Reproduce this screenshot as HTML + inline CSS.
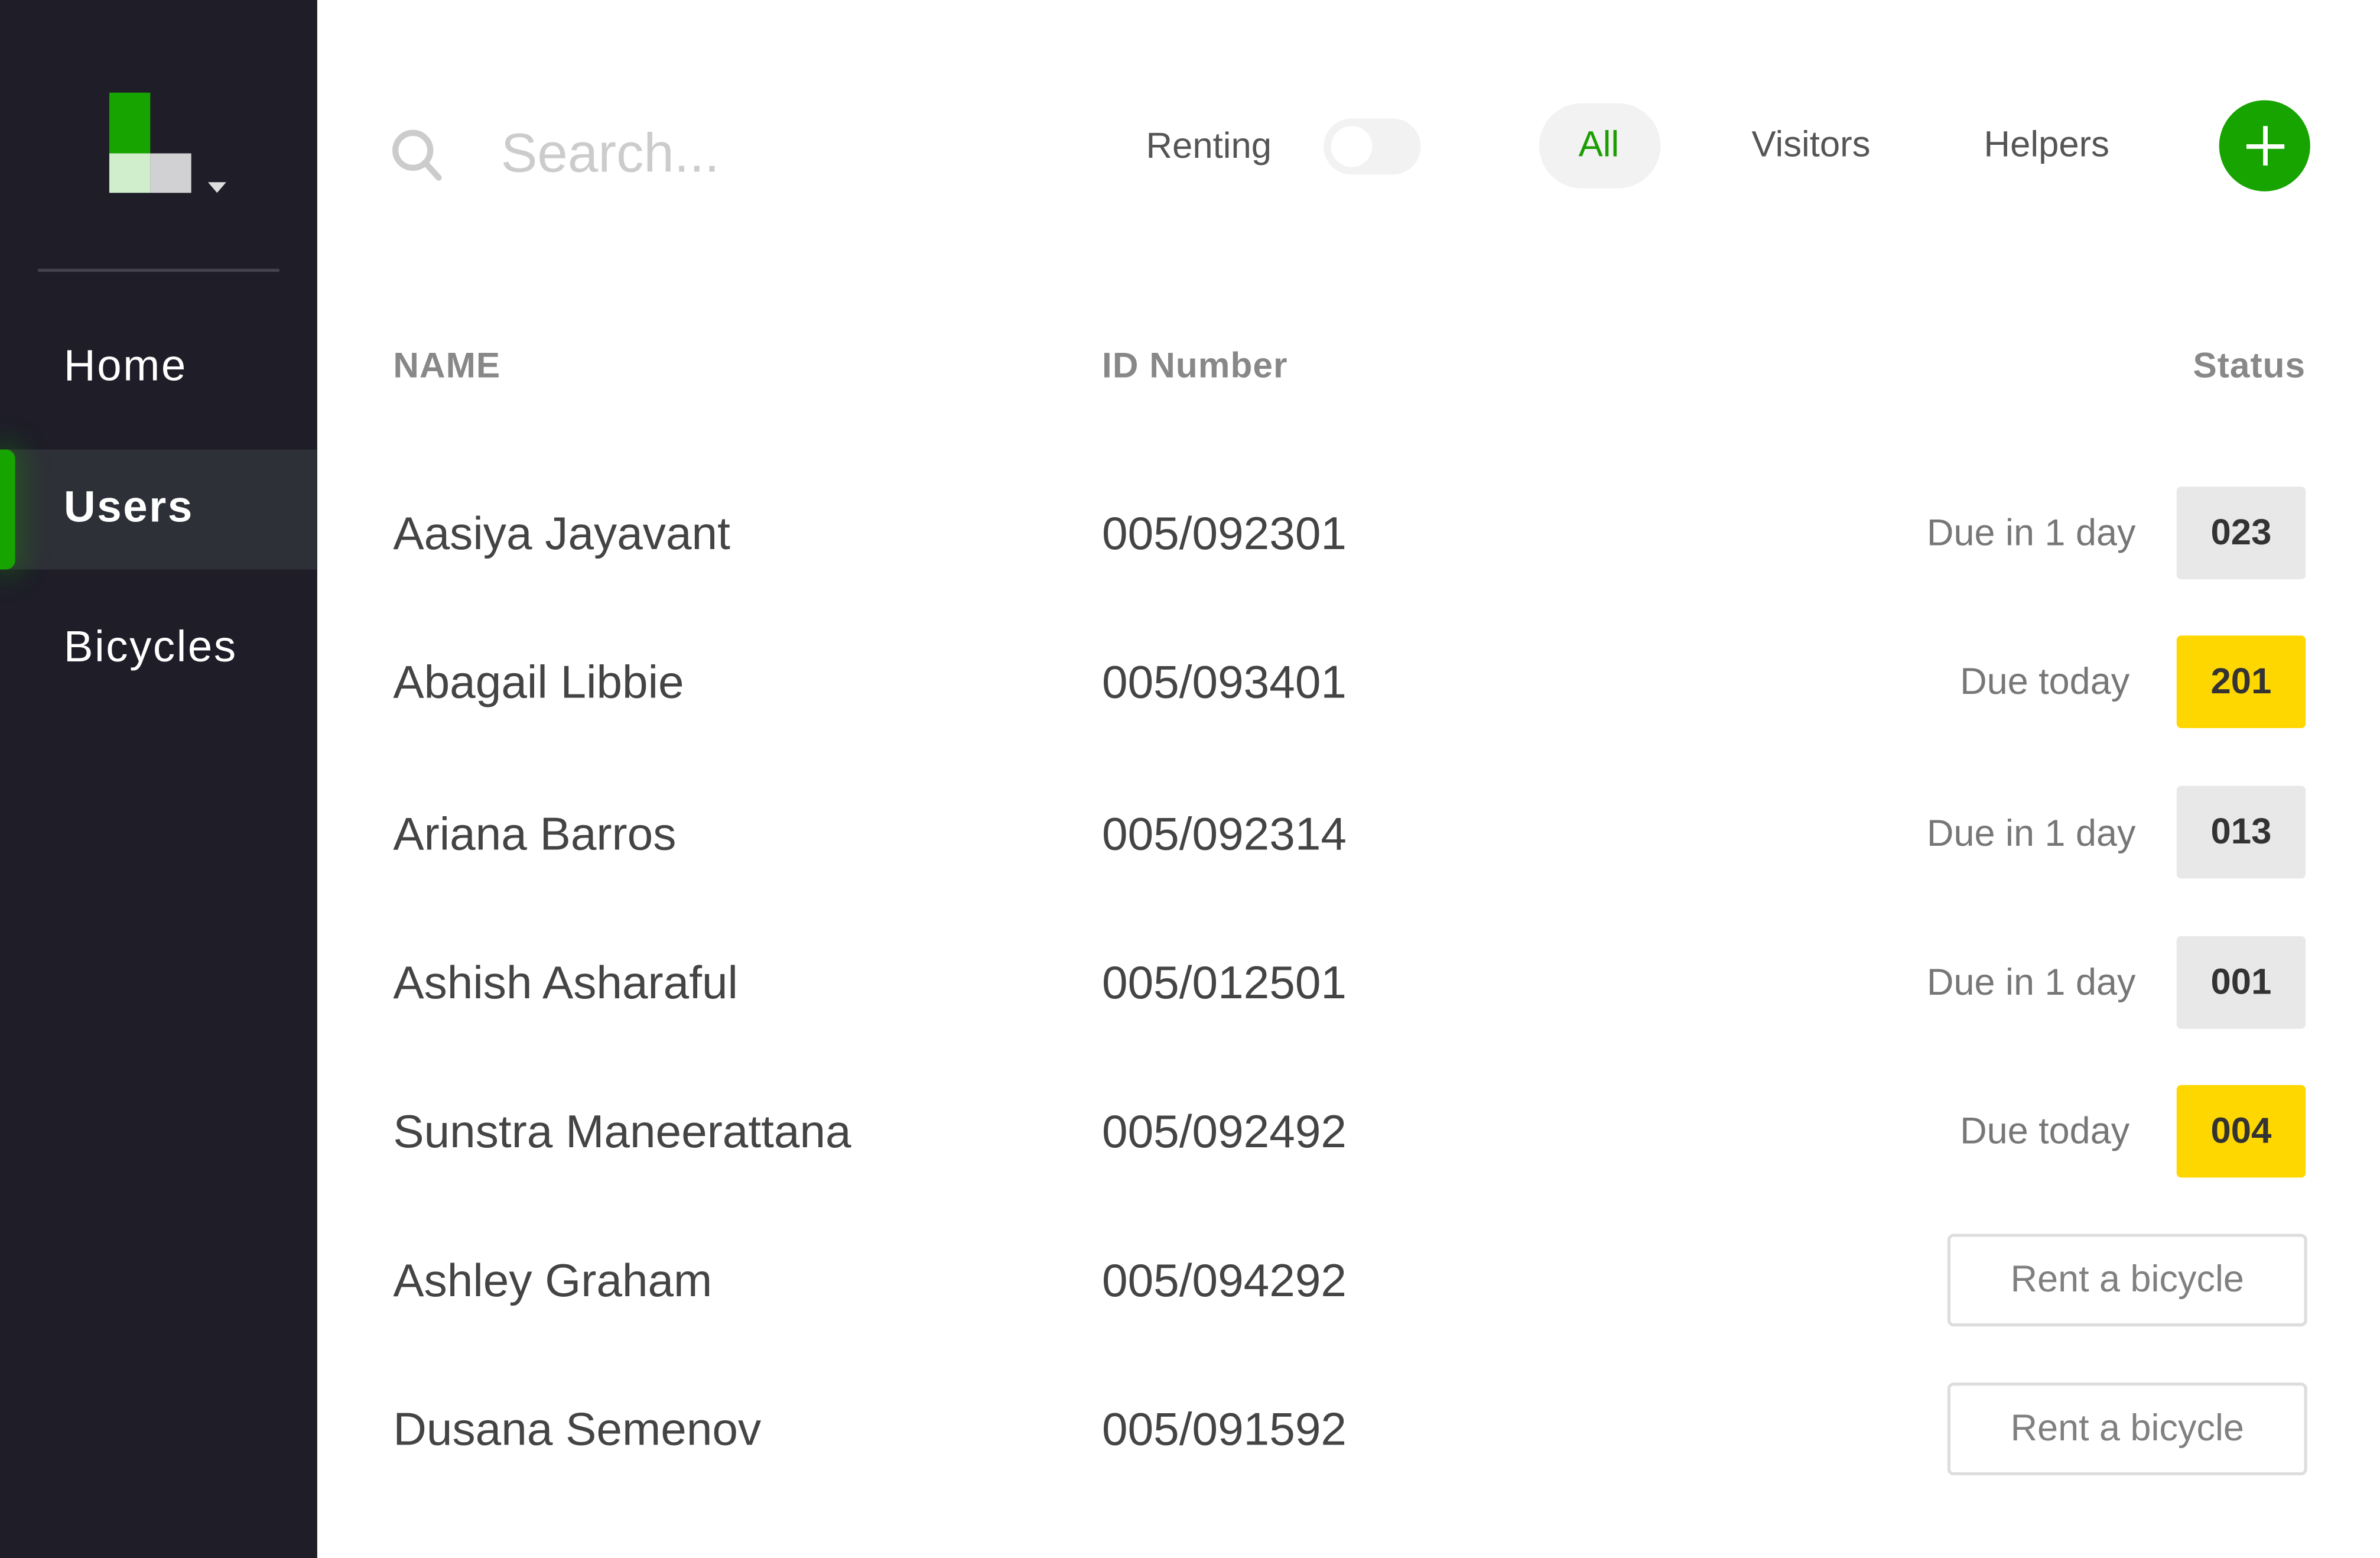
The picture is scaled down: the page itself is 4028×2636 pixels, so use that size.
<!DOCTYPE html>
<html><head><meta charset="utf-8"><style>
html,body{margin:0;padding:0;width:4028px;height:2636px;overflow:hidden;background:#fff}
#s{position:absolute;left:0;top:0;width:1568px;height:1026px;transform-origin:0 0;transform:scale(2.5689,2.5692);font-family:"Liberation Sans",sans-serif}
.a{position:absolute;white-space:nowrap}
.sb{position:absolute;left:0;top:0;width:209px;height:1026px;background:#1e1d28}
.nav{position:absolute;left:42px;font-size:29px;color:#fff;letter-spacing:1px;transform:translateY(-50%)}
.hd{font-size:23.5px;font-weight:bold;color:#888;letter-spacing:0.4px;transform:translateY(-50%)}
.nm{position:absolute;left:259px;font-size:30.5px;color:#444;transform:translateY(-50%)}
.id{position:absolute;left:726px;font-size:30.5px;color:#444;transform:translateY(-50%)}
.due{position:absolute;right:161px;font-size:24.5px;color:#777;transform:translateY(-50%)}
.bd{position:absolute;left:1434px;width:85px;height:61px;border-radius:3px;background:#e8e8e8;color:#333;font-weight:bold;font-size:24px;display:flex;align-items:center;justify-content:center;transform:translateY(-50%)}
.y{background:#ffd700}
.rb{position:absolute;left:1283px;width:233px;height:57px;border:2px solid #ddd;border-radius:4px;color:#808080;font-size:24.5px;display:flex;align-items:center;justify-content:center;transform:translateY(-50%)}
</style></head><body><div id="s">
<div class="sb">
<div class="a" style="left:72px;top:61px;width:27px;height:40px;background:#17a300"></div>
<div class="a" style="left:72px;top:101px;width:27px;height:26px;background:#d0edcc"></div>
<div class="a" style="left:99px;top:101px;width:27px;height:26px;background:#d1d1d4"></div>
<div class="a" style="left:137px;top:120px;width:0;height:0;border-left:6px solid transparent;border-right:6px solid transparent;border-top:7px solid #ddd"></div>
<div class="a" style="left:25px;top:177px;width:159px;height:2px;background:#44434f"></div>
<div class="nav" style="top:242px">Home</div>
<div class="a" style="left:0;top:296px;width:209px;height:79px;background:#2e3037"></div>
<div class="a" style="left:0;top:296px;width:10px;height:79px;background:#17a300;border-radius:0 6px 6px 0;box-shadow:0 0 18px 4px rgba(23,163,0,.35)"></div>
<div class="nav" style="top:335px;font-weight:bold">Users</div>
<div class="nav" style="top:427px">Bicycles</div>
</div>
<svg class="a" style="left:257px;top:84px" width="36" height="36" viewBox="0 0 36 36"><circle cx="15" cy="15" r="11.5" fill="none" stroke="#ccc" stroke-width="4"/><line x1="23" y1="23" x2="32" y2="33" stroke="#ccc" stroke-width="4" stroke-linecap="round"/></svg>
<div class="a" style="left:330px;top:101px;transform:translateY(-50%);font-size:36px;color:#ccc">Search...</div>
<div class="a" style="left:755px;top:97px;transform:translateY(-50%);font-size:24px;color:#555">Renting</div>
<div class="a" style="left:872px;top:78px;width:64px;height:37px;border-radius:19px;background:#f2f2f2"></div>
<div class="a" style="left:877px;top:83px;width:27px;height:27px;border-radius:50%;background:#fff"></div>
<div class="a" style="left:1014px;top:68px;width:80px;height:56px;border-radius:28px;background:#f2f2f2"></div>
<div class="a" style="left:1040px;top:96px;transform:translateY(-50%);font-size:24px;color:#1a9e00">All</div>
<div class="a" style="left:1154px;top:96px;transform:translateY(-50%);font-size:24px;color:#555">Visitors</div>
<div class="a" style="left:1307px;top:96px;transform:translateY(-50%);font-size:24px;color:#555">Helpers</div>
<div class="a" style="left:1462px;top:66px;width:60px;height:60px;border-radius:50%;background:#17a300"></div>
<div class="a" style="left:1480px;top:94.5px;width:25px;height:3px;background:#fff"></div>
<div class="a" style="left:1491px;top:83px;width:3px;height:26px;background:#fff"></div>
<div class="a hd" style="left:259px;top:241px">NAME</div>
<div class="a hd" style="left:726px;top:241px">ID Number</div>
<div class="a hd" style="right:49px;top:241px">Status</div>

<div class="nm" style="top:352px">Aasiya Jayavant</div><div class="id" style="top:352px">005/092301</div><div class="due" style="top:352px">Due in 1 day</div><div class="bd" style="top:351px">023</div>
<div class="nm" style="top:450px">Abagail Libbie</div><div class="id" style="top:450px">005/093401</div><div class="due" style="top:450px;right:165px">Due today</div><div class="bd y" style="top:449px">201</div>
<div class="nm" style="top:550px">Ariana Barros</div><div class="id" style="top:550px">005/092314</div><div class="due" style="top:550px">Due in 1 day</div><div class="bd" style="top:548px">013</div>
<div class="nm" style="top:648px">Ashish Asharaful</div><div class="id" style="top:648px">005/012501</div><div class="due" style="top:648px">Due in 1 day</div><div class="bd" style="top:647px">001</div>
<div class="nm" style="top:746px">Sunstra Maneerattana</div><div class="id" style="top:746px">005/092492</div><div class="due" style="top:746px;right:165px">Due today</div><div class="bd y" style="top:745px">004</div>
<div class="nm" style="top:844px">Ashley Graham</div><div class="id" style="top:844px">005/094292</div><div class="rb" style="top:843px">Rent a bicycle</div>
<div class="nm" style="top:942px">Dusana Semenov</div><div class="id" style="top:942px">005/091592</div><div class="rb" style="top:941px">Rent a bicycle</div>
</div></body></html>
